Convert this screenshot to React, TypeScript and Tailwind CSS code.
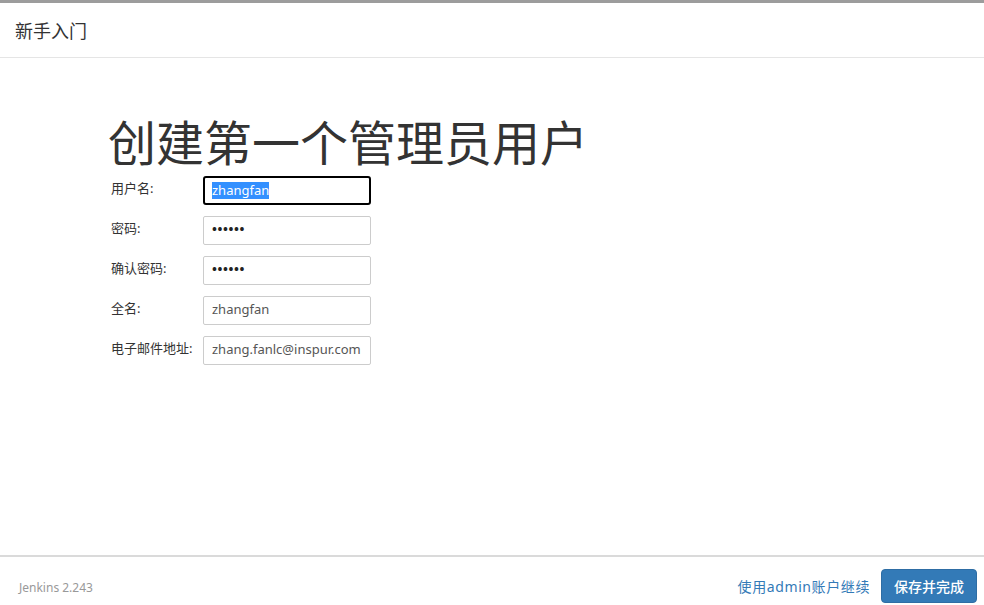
const font = { fontFamily: '"Noto Sans", "Noto Sans CJK SC", sans-serif' }

const Field = ({ label, value, focused, secret }: { label: string; value: string; focused?: boolean; secret?: boolean }) => {
  return (
    <div className="flex items-center h-[40px]">
      <label className="w-[95px] pl-[3px] text-[13px] text-[#333] -mt-[3px]">{label}</label>
      <div
        className={
          focused
            ? "w-[168px] h-[29px] border-2 border-black rounded-[3px] flex items-center px-[7px] text-[13px]"
            : "w-[168px] h-[29px] border border-[#ccc] rounded-[2px] flex items-center px-[8px] text-[13px] text-[#555]"
        }
      >
        {focused ? (
          <span className="bg-[#3390ff] text-white leading-[17px]">{value}</span>
        ) : secret ? (
          <span className="text-[13px] font-bold text-[#222] tracking-[0.6px]">{value}</span>
        ) : (
          <span className="whitespace-nowrap overflow-hidden">{value}</span>
        )}
      </div>
    </div>
  )
}

export default function App() {
  return (
    <div className="h-[605px] w-[984px] flex flex-col bg-white border-t-[3px] border-[#9c9c9c] overflow-hidden" style={font}>
      <div className="h-[55px] border-b border-[#e5e5e5] flex items-center px-[15px] shrink-0">
        <h4 className="text-[18px] text-[#333] pt-[3px]">新手入门</h4>
      </div>

      <div className="flex-1 pl-[108px] pt-[56px]">
        <h1 className="text-[48px] leading-[58px] text-[#333]">创建第一个管理员用户</h1>
        <div className="flex flex-col -mt-[2px]">
          <Field label="用户名:" value="zhangfan" focused />
          <Field label="密码:" value="••••••" secret />
          <Field label="确认密码:" value="••••••" secret />
          <Field label="全名:" value="zhangfan" />
          <Field label="电子邮件地址:" value="zhang.fanlc@inspur.com" />
        </div>
      </div>

      <div className="h-[50px] shrink-0 border-t-2 border-[#dadada] flex items-start pt-[12px] pl-[19px] pr-[7px]">
        <span className="text-[12px] text-[#999] mt-[10px]">Jenkins 2.243</span>
        <div className="ml-auto flex items-center gap-[11px]">
          <a className="text-[14px] text-[#337ab7] tracking-[0.6px]">使用admin账户继续</a>
          <button className="h-[34px] px-[12px] bg-[#337ab7] border border-[#2e6da4] rounded-[4px] text-white text-[14px] font-medium">
            保存并完成
          </button>
        </div>
      </div>
    </div>
  )
}
